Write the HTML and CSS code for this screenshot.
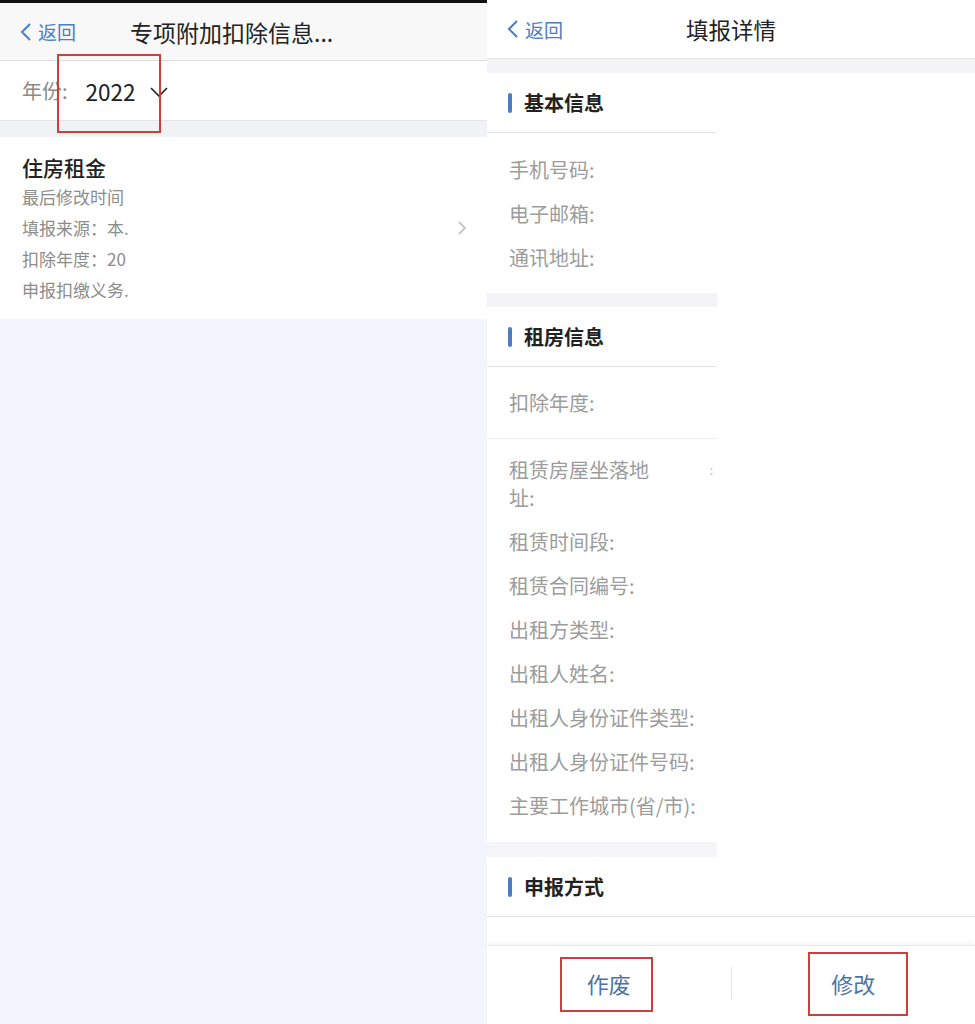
FILE: index.html
```html
<!DOCTYPE html>
<html lang="zh-CN">
<head>
    <meta charset="UTF-8">
    <meta name="viewport" content="width=device-width, initial-scale=1.0">
    <title>填报详情</title>
    <link rel="stylesheet" href="styles.css">
</head>
<body>
<div class="screens">

    <!-- Left screen: list of deductions -->
    <div class="screen screen-list">
        <div class="status-bar"></div>
        <header class="list-header">
            <a href="#" class="back-link">
                <svg width="12" height="20" viewBox="0 0 12 20"><path d="M10 2 L2 10 L10 18" fill="none" stroke="#4a7fc3" stroke-width="2"/></svg>
                返回
            </a>
            <span class="list-title">专项附加扣除信息...</span>
        </header>

        <div class="year-row">
            <span class="year-label">年份:</span>
            <span class="year-value">2022</span>
            <svg class="year-arrow" width="18" height="12" viewBox="0 0 18 12"><path d="M1 2 L9 10 L17 2" fill="none" stroke="#222" stroke-width="1.6"/></svg>
            <div class="mark mark-year"></div>
        </div>

        <div class="list-gap"></div>

        <div class="item-card">
            <div class="item-body">
                <div class="item-title">住房租金</div>
                <div class="item-line">最后修改时间</div>
                <div class="item-line">填报来源：本.</div>
                <div class="item-line">扣除年度：20</div>
                <div class="item-line">申报扣缴义务.</div>
            </div>
            <svg class="item-arrow" width="10" height="16" viewBox="0 0 10 16"><path d="M2 2 L8 8 L2 14" fill="none" stroke="#c4c4c4" stroke-width="1.8"/></svg>
        </div>
    </div>

    <!-- Right screen: filled details -->
    <div class="screen screen-detail">
        <header class="detail-header">
            <a href="#" class="back-link">
                <svg width="12" height="20" viewBox="0 0 12 20"><path d="M10 2 L2 10 L10 18" fill="none" stroke="#4a7fc3" stroke-width="2"/></svg>
                返回
            </a>
            <span class="detail-title">填报详情</span>
            <span></span>
        </header>

        <div class="detail-body">
            <div class="section-gap"></div>

            <div class="detail-split">
                <div class="detail-col">
                    <section class="section">
                        <h3 class="section-head"><span class="section-bar"></span>基本信息</h3>
                        <div class="field-group">
                            <div class="field">手机号码:</div>
                            <div class="field">电子邮箱:</div>
                            <div class="field">通讯地址:</div>
                        </div>
                    </section>

                    <div class="section-gap"></div>

                    <section class="section">
                        <h3 class="section-head"><span class="section-bar"></span>租房信息</h3>
                        <div class="field-group field-group-top">
                            <div class="field">扣除年度:</div>
                        </div>
                        <div class="field-group field-group-main">
                            <div class="field field-wrap">
                                <span class="field-label-narrow">租赁房屋坐落地址:</span>
                                <span class="field-colon">:</span>
                            </div>
                            <div class="field">租赁时间段:</div>
                            <div class="field">租赁合同编号:</div>
                            <div class="field">出租方类型:</div>
                            <div class="field">出租人姓名:</div>
                            <div class="field">出租人身份证件类型:</div>
                            <div class="field">出租人身份证件号码:</div>
                            <div class="field">主要工作城市(省/市):</div>
                        </div>
                    </section>

                    <div class="section-gap section-gap-last"></div>
                </div>
            </div>

            <section class="section">
                <h3 class="section-head"><span class="section-bar"></span>申报方式</h3>
            </section>
        </div>

        <footer class="action-bar">
            <div class="action">
                <span class="action-text">作废</span>
                <div class="mark mark-void"></div>
            </div>
            <div class="action-divider"></div>
            <div class="action">
                <span class="action-text">修改</span>
                <div class="mark mark-edit"></div>
            </div>
        </footer>
    </div>

</div>
</body>
</html>
```

FILE: styles.css
```css
body {
    margin: 0;
    padding: 0;
    font-family: "Noto Sans CJK SC", "Noto Sans", sans-serif;
    color: #222;
    background-color: #fff;
}

.screens {
    display: flex;
    width: 975px;
    height: 1024px;
    overflow: hidden;
}

.screen {
    height: 1024px;
    overflow: hidden;
}

.back-link {
    display: flex;
    align-items: center;
    gap: 6px;
    color: #4a7fc3;
    font-size: 19px;
    text-decoration: none;
}

/* left screen */
.screen-list {
    width: 487px;
    background-color: #f4f5fc;
}

.status-bar {
    height: 3px;
    background-color: #111;
}

.list-header {
    height: 57px;
    display: flex;
    align-items: center;
    padding-left: 20px;
    background-color: #f8f8f8;
    border-bottom: 1px solid #dcdcdc;
}

.list-title {
    margin-left: 54px;
    font-size: 23px;
    color: #222;
}

.year-row {
    position: relative;
    height: 59px;
    display: flex;
    align-items: center;
    padding-left: 22px;
    background-color: #fff;
    border-bottom: 1px solid #e6e6e6;
}

.year-label {
    font-size: 20px;
    color: #8a8a8a;
}

.year-value {
    margin-left: 18px;
    font-size: 22.5px;
    color: #222;
}

.year-arrow {
    margin-left: 14px;
    margin-top: 2px;
}

.mark {
    position: absolute;
    border: 2px solid #cf3f3a;
}

.mark-year {
    left: 57px;
    top: -7px;
    width: 100px;
    height: 75px;
}

.list-gap {
    height: 16px;
    background-color: #f1f2f6;
}

.item-card {
    display: flex;
    align-items: center;
    justify-content: space-between;
    padding: 16px 20px 14px 22px;
    background-color: #fff;
}

.item-title {
    font-size: 21px;
    line-height: 28px;
    font-weight: 500;
    color: #222;
}

.item-line {
    font-size: 17px;
    line-height: 31px;
    color: #8c8c8c;
}

.item-arrow {
    margin-top: -2px;
}

/* right screen */
.screen-detail {
    width: 488px;
    display: flex;
    flex-direction: column;
    background-color: #fff;
}

.detail-header {
    height: 58px;
    flex-shrink: 0;
    display: grid;
    grid-template-columns: 1fr auto 1fr;
    align-items: center;
    padding-left: 20px;
    background-color: #fff;
    border-bottom: 1px solid #e4e4e4;
}

.detail-title {
    font-size: 22.5px;
    color: #222;
    margin-left: -20px;
}

.detail-body {
    flex: 1;
    overflow: hidden;
    background-color: #fff;
}

.section-gap {
    height: 14px;
    background-color: #f4f4f6;
}

.section-gap-last {
    height: 15px;
    background-color: #f6f6f8;
}

.detail-split {
    display: flex;
    background-color: #fff;
}

.detail-col {
    width: 230px;
}

.section {
    background-color: #fff;
}

.section-head {
    margin: 0;
    height: 59px;
    display: flex;
    align-items: center;
    padding-left: 21px;
    font-size: 20px;
    font-weight: bold;
    color: #222;
    border-bottom: 1px solid #e2e2e2;
}

.section-bar {
    width: 4px;
    height: 20px;
    margin-right: 12px;
    border-radius: 2px;
    background-color: #4b7cc4;
}

.field-group {
    padding: 15px 0 13px 22px;
}

.field-group-top {
    padding: 14px 0 13px 22px;
    border-bottom: 1px solid #eeeeee;
}

.field-group-main {
    padding: 9px 0 14px 22px;
}

.field {
    padding: 8px 0;
    font-size: 20px;
    line-height: 28px;
    color: #9c9c9c;
    white-space: nowrap;
}

.field-wrap {
    display: flex;
    justify-content: space-between;
    white-space: normal;
}

.field-label-narrow {
    width: 146px;
}

.field-colon {
    padding-right: 4px;
    font-size: 12px;
    color: #bbb;
}

.action-bar {
    height: 74px;
    flex-shrink: 0;
    display: flex;
    align-items: center;
    padding-bottom: 4px;
    background-color: #fff;
    border-top: 1px solid #e8e8e8;
    box-shadow: 0 -2px 4px rgba(0, 0, 0, 0.04);
}

.action {
    position: relative;
    flex: 1;
    display: flex;
    justify-content: center;
}

.action-text {
    font-size: 22px;
    line-height: 30px;
    color: #4d73a6;
}

.action-divider {
    width: 1px;
    height: 32px;
    background-color: #e4e4e4;
}

.mark-void {
    left: 73px;
    top: -11px;
    width: 89px;
    height: 51px;
}

.mark-edit {
    left: 76px;
    top: -16px;
    width: 96px;
    height: 60px;
}
```
